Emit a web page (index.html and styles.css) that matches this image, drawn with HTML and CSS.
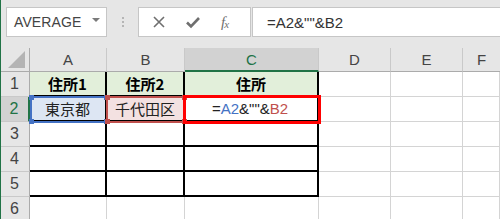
FILE: index.html
```html
<!DOCTYPE html>
<html lang="ja">
<head>
<meta charset="utf-8">
<link rel="stylesheet" href="styles.css">
</head>
<body>
<div class="app">
  <div class="topbar">
    <div class="namebox"><span class="nb-text">AVERAGE</span><span class="caret"></span></div>
    <div class="grip"><i></i><i></i><i></i></div>
    <div class="fxbtns">
      <svg class="ico" width="14" height="14" viewBox="0 0 14 14"><path d="M2 2 L12 12 M12 2 L2 12" stroke="#6f6f6f" stroke-width="1.6" fill="none"/></svg>
      <svg class="ico" width="16" height="14" viewBox="0 0 16 14"><path d="M2 7.5 L6 11.5 L14 3" stroke="#6f6f6f" stroke-width="2.6" fill="none"/></svg>
      <span class="fx">f<sub>x</sub></span>
    </div>
    <div class="formula">=A2&amp;""&amp;B2</div>
  </div>
  <div class="sheet">
    <div class="h corner"><span class="tri"></span></div>
    <div class="h col">A</div>
    <div class="h col">B</div>
    <div class="h col sel">C</div>
    <div class="h col">D</div>
    <div class="h col">E</div>
    <div class="h col last">F</div>

    <div class="h row">1</div>
    <div class="c b hd">住所1</div>
    <div class="c b hd">住所2</div>
    <div class="c b hd">住所</div>
    <div class="c"></div><div class="c"></div><div class="c"></div>

    <div class="h row sel">2</div>
    <div class="c b ra">東京都</div>
    <div class="c b rb">千代田区</div>
    <div class="c b fm">=<span class="blue">A2</span>&amp;""&amp;<span class="red">B2</span></div>
    <div class="c"></div><div class="c"></div><div class="c"></div>

    <div class="h row">3</div>
    <div class="c b"></div><div class="c b"></div><div class="c b"></div>
    <div class="c"></div><div class="c"></div><div class="c"></div>

    <div class="h row">4</div>
    <div class="c b"></div><div class="c b"></div><div class="c b"></div>
    <div class="c"></div><div class="c"></div><div class="c"></div>

    <div class="h row">5</div>
    <div class="c b"></div><div class="c b"></div><div class="c b"></div>
    <div class="c"></div><div class="c"></div><div class="c"></div>

    <div class="h row">6</div>
    <div class="c"></div><div class="c"></div><div class="c"></div>
    <div class="c"></div><div class="c"></div><div class="c"></div>

    <div class="range range-a"><i class="k tl"></i><i class="k tr"></i><i class="k bl"></i><i class="k br"></i></div>
    <div class="range range-b"><i class="k tl"></i><i class="k tr"></i><i class="k bl"></i><i class="k br"></i></div>
    <div class="hilite"></div>
  </div>
  <div class="winedge"></div>
</div>
</body>
</html>
```

FILE: styles.css
```css
* { box-sizing: border-box; }
html, body { margin: 0; padding: 0; }
body {
  width: 500px;
  height: 219px;
  overflow: hidden;
  background: #fff;
  font-family: "Liberation Sans", Arial, sans-serif;
}
.app { position: relative; width: 500px; height: 219px; overflow: hidden; }

.topbar {
  height: 48px;
  background: #e6e6e6;
  display: flex;
  align-items: flex-start;
  padding-top: 7px;
}
.namebox {
  margin-left: 6px;
  width: 101px;
  height: 30px;
  background: #fff;
  border: 1px solid #c6c6c6;
  display: flex;
  align-items: center;
  padding-left: 7px;
  padding-right: 6px;
  justify-content: space-between;
}
.nb-text { font-size: 14px; color: #444; letter-spacing: 0.1px; }
.caret {
  width: 0; height: 0;
  border-left: 4px solid transparent;
  border-right: 4px solid transparent;
  border-top: 4px solid #7a7a7a;
  margin-top: -4px;
}
.grip {
  width: 31px;
  height: 30px;
  display: flex;
  flex-direction: column;
  align-items: center;
  justify-content: center;
  gap: 2px;
}
.grip i { display: block; width: 2px; height: 2px; background: #b5b5b5; }
.fxbtns {
  width: 113px;
  height: 30px;
  background: #fff;
  border: 1px solid #c6c6c6;
  display: flex;
  align-items: center;
  padding-left: 13px;
  gap: 19px;
}
.ico { display: block; }
.fx {
  font-family: "Liberation Serif", serif;
  font-style: italic;
  font-size: 15px;
  color: #6f6f6f;
  margin-left: 1px;
  line-height: 1;
}
.fx sub { font-size: 11px; vertical-align: -1px; margin-left: -1px; }
.formula {
  margin-left: 1px;
  flex: 1;
  height: 30px;
  background: #fff;
  border: 1px solid #c6c6c6;
  border-right: none;
  display: flex;
  align-items: center;
  padding-left: 14px;
  font-size: 15px;
  color: #333;
}

.sheet {
  position: relative;
  display: grid;
  grid-template-columns: 30px 77px 78px 134px 72px 72px 37px;
  grid-template-rows: 24px repeat(6, 25px);
}
.h {
  background: #e6e6e6;
  color: #444;
  font-size: 15px;
  display: flex;
  align-items: center;
  justify-content: center;
}
.col { border-right: 1px solid #c9c9c9; border-bottom: 1px solid #ababab; }
.col.last { border-right: none; }
.row { border-right: 1px solid #ababab; border-bottom: 1px solid #c9c9c9; font-size: 16px; }
.corner { border-right: 1px solid #ababab; border-bottom: 1px solid #ababab; position: relative; }
.tri {
  position: absolute;
  right: 4px;
  bottom: 3px;
  width: 0; height: 0;
  border-left: 17px solid transparent;
  border-bottom: 17px solid #b4b4b4;
}
.h.sel { background: #d2d2d2; color: #217346; }
.col.sel { border-bottom: 2px solid #217346; }
.row.sel { border-right: 2px solid #217346; }

.c {
  border-right: 1px solid #d4d4d4;
  border-bottom: 1px solid #d4d4d4;
  display: flex;
  align-items: center;
  justify-content: center;
  font-family: "Noto Sans CJK JP", "Liberation Sans", sans-serif;
  font-size: 15px;
  color: #222;
}
.c.b { border-right: 2px solid #000; border-bottom: 2px solid #000; }
.c.hd { background: #e2efda; font-weight: bold; color: #000; }
.c.ra { background: #dde6f3; }
.c.rb { background: #f3e1e1; }
.c.fm { font-family: "Liberation Sans", sans-serif; font-size: 15px; padding-right: 2px; }
.blue { color: #4472c4; }
.red { color: #c0504d; }

.range { position: absolute; border: 2px solid; pointer-events: none; }
.range-a { left: 30px; top: 48px; width: 78px; height: 27px; border-color: #4472c4; color: #4472c4; }
.range-b { left: 106px; top: 48px; width: 80px; height: 27px; border-color: #c0504d; color: #c0504d; }
.k { position: absolute; width: 5px; height: 5px; background: currentColor; }
.tl { left: -3px; top: -3px; }
.tr { right: -3px; top: -3px; }
.bl { left: -3px; bottom: -3px; }
.br { right: -3px; bottom: -3px; }
.hilite {
  position: absolute;
  left: 183px;
  top: 47px;
  width: 138px;
  height: 29px;
  border: 3px solid #ff0000;
}
.winedge {
  position: absolute;
  left: 0; top: 0;
  width: 1px; height: 219px;
  background: #217346;
}
```
